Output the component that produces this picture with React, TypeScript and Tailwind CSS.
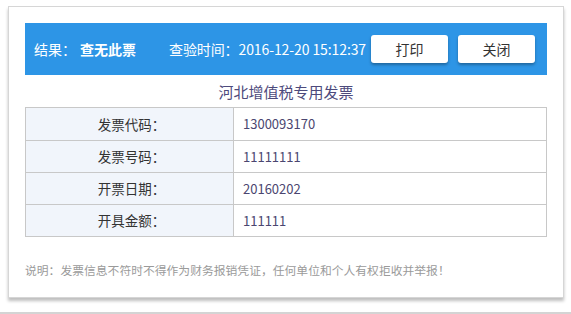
import React from 'react';

const rows = [
  { label: '发票代码：', value: '1300093170' },
  { label: '发票号码：', value: '11111111' },
  { label: '开票日期：', value: '20160202' },
  { label: '开具金额：', value: '111111' },
];

export default function App() {
  return (
    <div
      className="w-[571px] h-[314px] bg-white relative overflow-hidden"
      style={{ fontFamily: '"Noto Sans CJK SC", "Noto Sans", sans-serif' }}
    >
      <div className="pt-[6px] pl-[8px]">
        <div className="w-[556px] h-[292px] border border-[#d6d6d6] bg-white shadow-[0_3px_3px_rgba(0,0,0,0.25)] px-[16px] pt-[16px]">
          {/* Result bar */}
          <div className="h-[52px] bg-[#2d95e6] flex items-center pl-[9px] text-white text-[14px] whitespace-nowrap">
            <span>结果：</span>
            <span className="ml-[4px] font-semibold">查无此票</span>
            <span className="ml-[33px] tracking-[-0.1px]">查验时间：2016-12-20 15:12:37</span>
            <button className="shrink-0 ml-[5px] w-[77px] h-[28px] bg-white rounded-[3px] text-[#333] text-[14px] shadow-[0_2px_3px_rgba(0,0,0,0.3)]">
              打印
            </button>
            <button className="shrink-0 ml-[10px] w-[77px] h-[28px] bg-white rounded-[3px] text-[#333] text-[14px] shadow-[0_2px_3px_rgba(0,0,0,0.3)]">
              关闭
            </button>
          </div>

          {/* Title */}
          <div className="h-[32px] pt-[2px] flex items-center justify-center text-[15px] text-[#4d4a7c]">
            河北增值税专用发票
          </div>

          {/* Table */}
          <div className="border border-[#c8c8c8]">
            {rows.map((r, i) => (
              <div key={r.label} className={`flex h-[32px] ${i > 0 ? 'border-t border-[#c8c8c8]' : ''}`}>
                <div className="w-[208px] bg-[#f1f5fb] border-r border-[#c8c8c8] flex items-center justify-center pl-[4px] text-[13.5px] text-[#333]">
                  {r.label}
                </div>
                <div className="flex-1 flex items-center pl-[9px] text-[13px] text-[#4b4670]">
                  {r.value}
                </div>
              </div>
            ))}
          </div>

          {/* Note */}
          <div className="mt-[24px] text-[11.8px] text-[#9a9a9a] whitespace-nowrap">
            说明：发票信息不符时不得作为财务报销凭证，任何单位和个人有权拒收并举报！
          </div>
        </div>
      </div>
      <div className="absolute left-0 right-0 bottom-0 h-[2px] bg-[#d4d4d4]" />
    </div>
  );
}
